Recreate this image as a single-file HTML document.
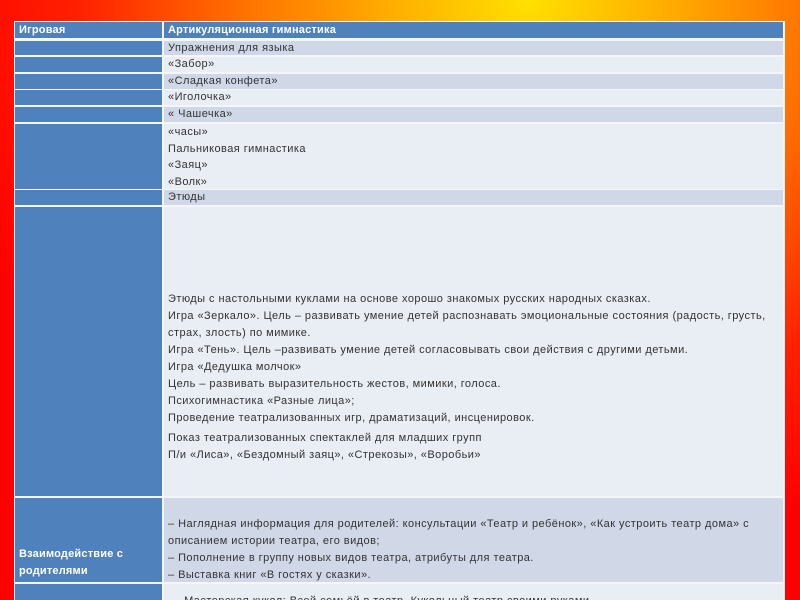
<!DOCTYPE html>
<html><head><meta charset="utf-8"><style>
*{margin:0;padding:0;box-sizing:border-box}
html,body{width:800px;height:600px;overflow:hidden}
body{position:relative;background:radial-gradient(ellipse 75% 95% at 66% 0%,#ffe000 0%,#ffb000 22%,#ff7000 48%,#ff2000 75%,#ff0000 100%);font-family:"Liberation Sans",sans-serif;}
.c{position:absolute;font-size:11px;color:#333;letter-spacing:0.45px;line-height:17px;padding-left:4px;white-space:nowrap;overflow:hidden}
.l{background:#4f81bd;left:15px;width:147px}
.r{left:164px;width:619px}
.d{background:#d0d8e8}
.e{background:#e9edf4}
.h{color:#fff;font-weight:bold;background:#4f81bd;letter-spacing:0.2px}
.frame{position:absolute;left:14px;top:21px;width:771px;height:579px;background:#f4f6fa}
</style></head><body>
<div class="frame"></div>
<div class="c l h" style="top:22px;height:16px;line-height:16px">Игровая</div>
<div class="c r h" style="top:22px;height:16px;line-height:16px">Артикуляционная гимнастика</div>

<div class="c l" style="top:41px;height:14px"></div>
<div class="c r d" style="top:41px;height:14px;line-height:14px">Упражнения для языка</div>
<div class="c l" style="top:57px;height:15px"></div>
<div class="c r e" style="top:57px;height:15px;line-height:15px">«Забор»</div>
<div class="c l" style="top:74px;height:15px"></div>
<div class="c r d" style="top:74px;height:15px;line-height:15px">«Сладкая конфета»</div>
<div class="c l" style="top:90px;height:15px"></div>
<div class="c r e" style="top:90px;height:15px;line-height:15px">«Иголочка»</div>
<div class="c l" style="top:107px;height:15px"></div>
<div class="c r d" style="top:107px;height:15px;line-height:15px">« Чашечка»</div>
<div class="c l" style="top:124px;height:65px"></div>
<div class="c r e" style="top:124px;height:65px;line-height:16.5px;padding-top:0px">«часы»<br>Пальниковая гимнастика<br>«Заяц»<br>«Волк»</div>
<div class="c l" style="top:190px;height:15px"></div>
<div class="c r d" style="top:190px;height:15px;line-height:15px">Этюды</div>
<div class="c l" style="top:207px;height:289px"></div>
<div class="c r e" style="top:207px;height:289px;padding-top:84px">Этюды с настольными куклами на основе хорошо знакомых русских народных сказках.<br>Игра «Зеркало». Цель – развивать умение детей распознавать эмоциональные состояния (радость, грусть,<br>страх, злость) по мимике.<br>Игра «Тень». Цель –развивать умение детей согласовывать свои действия с другими детьми.<br>Игра «Дедушка молчок»<br>Цель – развивать выразительность жестов, мимики, голоса.<br>Психогимнастика «Разные лица»;<br>Проведение театрализованных игр, драматизаций, инсценировок.<br><div style="height:3px"></div>Показ театрализованных спектаклей для младших групп<br>П/и «Лиса», «Бездомный заяц», «Стрекозы», «Воробьи»</div>
<div class="c l h" style="top:498px;height:84px;padding-top:48px;line-height:17px">Взаимодействие с<br>родителями</div>
<div class="c r d" style="top:498px;height:84px;padding-top:18px">– Наглядная информация для родителей: консультации «Театр и ребёнок», «Как устроить театр дома» с<br>описанием истории театра, его видов;<br>– Пополнение в группу новых видов театра, атрибуты для театра.<br>– Выставка книг «В гостях у сказки».</div>
<div class="c l" style="top:584px;height:16px"></div>
<div class="c r e" style="top:584px;height:16px;padding-top:9px;padding-left:10px">– Мастерская кукол: Всей семьёй в театр, Кукольный театр своими руками</div>
</body></html>
